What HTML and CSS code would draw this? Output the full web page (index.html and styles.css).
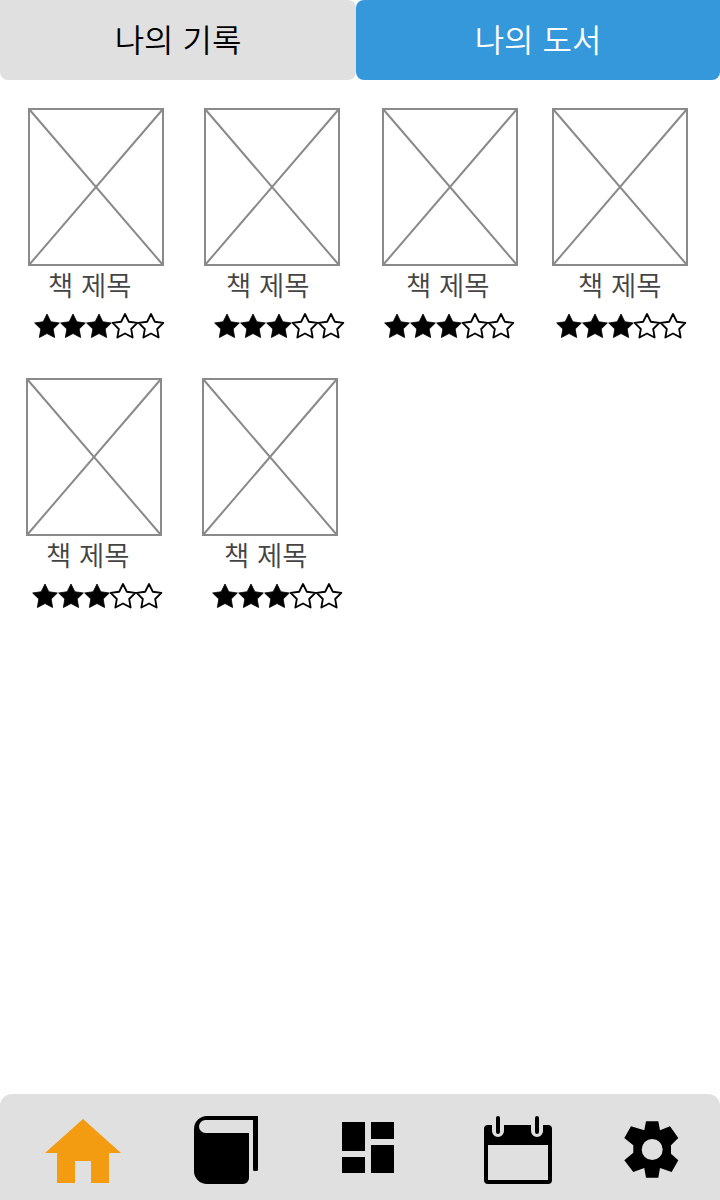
FILE: index.html
```html
<!DOCTYPE html>
<html lang="ko">
<head>
<meta charset="utf-8">
<title>나의 도서</title>
<link rel="stylesheet" href="styles.css">
</head>
<body>
<svg class="defs" width="0" height="0" aria-hidden="true">
  <defs>
    <symbol id="cover" viewBox="0 0 136 158" preserveAspectRatio="none">
      <rect x="1" y="1" width="134" height="156" fill="#fff" stroke="#8a8a8a" stroke-width="2"/>
      <path d="M1 1L135 157M135 1L1 157" fill="none" stroke="#8a8a8a" stroke-width="2"/>
    </symbol>
    <symbol id="star-on" viewBox="0 0 26 26" overflow="visible">
      <path d="M13 1L16.820 8.740 25.360 9.980 19.180 16.010 20.640 24.520 13 20.500 5.360 24.520 6.820 16.010 .64 9.980 9.180 8.740Z" fill="#000" stroke="#000" stroke-width=".8" stroke-linejoin="round"/>
    </symbol>
    <symbol id="star-off" viewBox="0 0 26 26" overflow="visible">
      <path d="M13 1L16.820 8.740 25.360 9.980 19.180 16.010 20.640 24.520 13 20.500 5.360 24.520 6.820 16.010 .64 9.980 9.180 8.740Z" fill="#fff" stroke="#000" stroke-width="1.800" stroke-linejoin="round"/>
    </symbol>
  </defs>
</svg>

<header class="tabs">
  <div class="tab tab-records">나의 기록</div>
  <div class="tab tab-library">나의 도서</div>
</header>

<main class="shelf">
  <section class="row row-first">
    <article class="book">
      <svg class="cover"><use href="#cover"/></svg>
      <div class="title title-a">책 제목</div>
      <div class="stars stars-a"><svg class="star"><use href="#star-on"/></svg><svg class="star"><use href="#star-on"/></svg><svg class="star"><use href="#star-on"/></svg><svg class="star"><use href="#star-off"/></svg><svg class="star"><use href="#star-off"/></svg></div>
    </article>
    <article class="book">
      <svg class="cover"><use href="#cover"/></svg>
      <div class="title title-b">책 제목</div>
      <div class="stars stars-b"><svg class="star"><use href="#star-on"/></svg><svg class="star"><use href="#star-on"/></svg><svg class="star"><use href="#star-on"/></svg><svg class="star"><use href="#star-off"/></svg><svg class="star"><use href="#star-off"/></svg></div>
    </article>
    <article class="book book-third">
      <svg class="cover"><use href="#cover"/></svg>
      <div class="title title-c">책 제목</div>
      <div class="stars stars-c"><svg class="star"><use href="#star-on"/></svg><svg class="star"><use href="#star-on"/></svg><svg class="star"><use href="#star-on"/></svg><svg class="star"><use href="#star-off"/></svg><svg class="star"><use href="#star-off"/></svg></div>
    </article>
    <article class="book book-fourth">
      <svg class="cover"><use href="#cover"/></svg>
      <div class="title title-d">책 제목</div>
      <div class="stars stars-d"><svg class="star"><use href="#star-on"/></svg><svg class="star"><use href="#star-on"/></svg><svg class="star"><use href="#star-on"/></svg><svg class="star"><use href="#star-off"/></svg><svg class="star"><use href="#star-off"/></svg></div>
    </article>
  </section>
  <section class="row row-second">
    <article class="book">
      <svg class="cover"><use href="#cover"/></svg>
      <div class="title title-a">책 제목</div>
      <div class="stars stars-a"><svg class="star"><use href="#star-on"/></svg><svg class="star"><use href="#star-on"/></svg><svg class="star"><use href="#star-on"/></svg><svg class="star"><use href="#star-off"/></svg><svg class="star"><use href="#star-off"/></svg></div>
    </article>
    <article class="book">
      <svg class="cover"><use href="#cover"/></svg>
      <div class="title title-b">책 제목</div>
      <div class="stars stars-b"><svg class="star"><use href="#star-on"/></svg><svg class="star"><use href="#star-on"/></svg><svg class="star"><use href="#star-on"/></svg><svg class="star"><use href="#star-off"/></svg><svg class="star"><use href="#star-off"/></svg></div>
    </article>
  </section>
</main>

<nav class="nav">
  <svg class="icon icon-home" viewBox="0 0 76 68">
    <path d="M38 3L76 37H64V67H46V45H30V67H12V37H0Z" fill="#f39c12"/>
  </svg>
  <svg class="icon icon-book" viewBox="0 0 64 68">
    <path d="M13 0H64V53.500A1.500 1.500 0 0 1 62.500 55H60.500A1.500 1.500 0 0 1 59 53.500V4H11.500A6.500 6.500 0 0 0 11.500 17H55V62A6 6 0 0 1 49 68H13A13 13 0 0 1 0 55V13A13 13 0 0 1 13 0Z" fill="#000"/>
  </svg>
  <svg class="icon icon-grid" viewBox="0 0 52 68">
    <path d="M0 6H23V35H0ZM0 41H23V57H0ZM29 6H52V23H29ZM29 29H52V57H29Z" fill="#000"/>
  </svg>
  <svg class="icon icon-calendar" viewBox="0 0 68 68">
    <rect y="9" width="68" height="59" rx="4" fill="#000"/>
    <rect x="4" y="29" width="60" height="35" fill="#e0e0e0"/>
    <path d="M14 8V15M53 8V15" stroke="#e0e0e0" stroke-width="12" stroke-linecap="round"/>
    <path d="M14 2V16M53 2V16" stroke="#000" stroke-width="4" stroke-linecap="round"/>
  </svg>
  <svg class="icon icon-gear" viewBox="0 0 58 68">
    <path d="M23 5.300H35.300L37 14.300 47 10.300 55.300 22 48 29.300V37.700L55.300 44.300 48.700 56 37 52 35.300 61.700H23L21.300 52 10.300 56 1.300 44.300 10.300 36.700V29.300L1.300 22 8 10.300 21.300 14.300ZM29.200 23A10.500 10.500 0 1 0 29.200 44 10.500 10.500 0 1 0 29.200 23Z" fill="#000" fill-rule="evenodd"/>
  </svg>
</nav>
</body>
</html>
```

FILE: styles.css
```css
* {
  box-sizing: border-box;
}

html,
body {
  margin: 0;
  height: 1200px;
}

body {
  display: flex;
  flex-direction: column;
  background: #fff;
  overflow: hidden;
  font-family: "Noto Sans CJK KR", "Noto Sans", sans-serif;
}

.defs {
  position: absolute;
}

.tabs {
  display: flex;
  height: 80px;
  flex: none;
}

.tab {
  display: flex;
  align-items: center;
  justify-content: center;
  height: 80px;
  padding-bottom: 4px;
  font-size: 32px;
  font-weight: 350;
  border-radius: 0 0 8px 8px;
}

.tab-records {
  width: 356px;
  background: #e0e0e0;
  color: #000;
  border-top-right-radius: 8px;
}

.tab-library {
  width: 364px;
  background: #3498db;
  color: #fff;
  border-top-left-radius: 8px;
}

.shelf {
  flex: 1;
  padding-top: 28px;
}

.row {
  display: flex;
  height: 270px;
}

.row-first {
  padding-left: 28px;
  gap: 40px;
}

.row-second {
  padding-left: 26px;
  gap: 40px;
}

.book {
  width: 136px;
  flex: none;
}

.book-third {
  margin-left: 2px;
}

.book-fourth {
  margin-left: -6px;
}

.cover {
  display: block;
  width: 136px;
  height: 158px;
}

.title {
  height: 40px;
  line-height: 37px;
  font-size: 27.5px;
  font-weight: 350;
  color: #444;
  white-space: nowrap;
}

.title-a { margin-left: 20px; }
.title-b { margin-left: 22px; }
.title-c { margin-left: 24px; }
.title-d { margin-left: 26px; }

.stars {
  display: flex;
  width: 130px;
  margin-top: 7px;
}

.stars-a { margin-left: 6px; }
.stars-b { margin-left: 10px; }
.stars-c { margin-left: 2px; }
.stars-d { margin-left: 4px; }

.star {
  display: block;
  width: 26px;
  height: 26px;
  flex: none;
  overflow: visible;
}

.nav {
  display: flex;
  align-items: flex-start;
  flex: none;
  height: 106px;
  padding: 22px 0 0 45px;
  background: #e0e0e0;
  border-radius: 12px 12px 0 0;
}

.icon {
  display: block;
  height: 68px;
  flex: none;
}

.icon-home { width: 76px; }
.icon-book { width: 64px; margin-left: 73px; }
.icon-grid { width: 52px; margin-left: 84px; }
.icon-calendar { width: 68px; margin-left: 90px; }
.icon-gear { width: 58px; margin-left: 71px; }
```
